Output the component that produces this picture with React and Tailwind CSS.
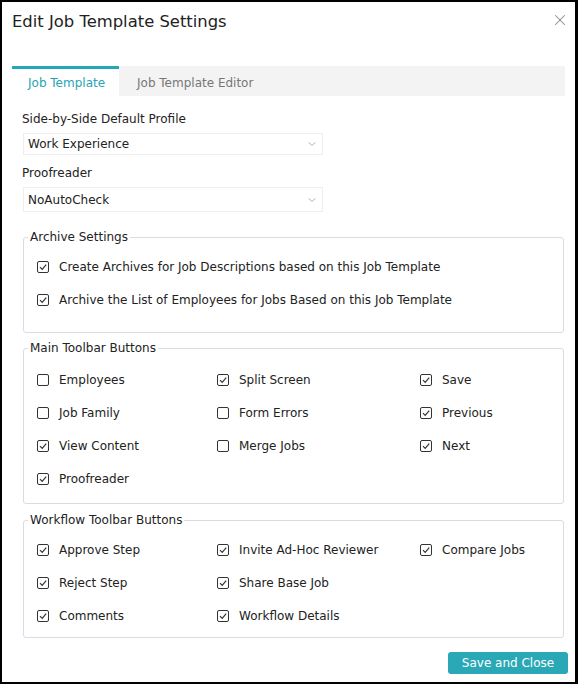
import { X, ChevronDown } from "lucide-react";

const font = { fontFamily: '"DejaVu Sans", Verdana, sans-serif' };

function Box({ checked }) {
  return (
    <span className="w-[12px] h-[12px] border border-[#333] rounded-[2px] flex items-center justify-center shrink-0 bg-white">
      {checked && (
        <svg width="10" height="10" viewBox="0 0 10 10">
          <path d="M2 5.2 L4.2 7.4 L8.2 2.6" fill="none" stroke="#333" strokeWidth="1.2" />
        </svg>
      )}
    </span>
  );
}

function Check({ label, checked }) {
  return (
    <label className="flex items-center gap-[10px] h-[33px] text-[12px] text-[#222]">
      <Box checked={checked} />
      <span>{label}</span>
    </label>
  );
}

function Group({ title, className, children }) {
  return (
    <fieldset className={`border border-[#d5dde5] rounded-[3px] mx-0 ${className}`}>
      <legend className="ml-[4px] px-[2px] text-[12px] leading-[16px] text-[#222]">{title}</legend>
      {children}
    </fieldset>
  );
}

function Select({ value, tall }) {
  return (
    <div
      className={`w-[300px] ${tall ? "h-[25px]" : "h-[22px]"} border border-[#eeeeee] flex items-center justify-between pl-[4px] pr-[4px] text-[12px] text-[#222]`}
    >
      <span>{value}</span>
      <ChevronDown size={12} strokeWidth={1.2} color="#777" />
    </div>
  );
}

const mainButtons = [
  ["Employees", false],
  ["Split Screen", true],
  ["Save", true],
  ["Job Family", false],
  ["Form Errors", false],
  ["Previous", true],
  ["View Content", true],
  ["Merge Jobs", false],
  ["Next", true],
  ["Proofreader", true],
];

const workflowButtons = [
  ["Approve Step", true],
  ["Invite Ad-Hoc Reviewer", true],
  ["Compare Jobs", true],
  ["Reject Step", true],
  ["Share Base Job", true],
  [null, false],
  ["Comments", true],
  ["Workflow Details", true],
];

export default function App() {
  return (
    <div
      className="w-[578px] h-[684px] bg-white border-2 border-r-[3px] border-black flex flex-col"
      style={font}
    >
      <div className="flex items-start justify-between pl-[10px] pr-[6px] pt-[9px] h-[64px]">
        <h1 className="text-[16.4px] leading-[22px] text-[#222]">Edit Job Template Settings</h1>
        <button className="mt-[0px] text-[#8a8a8a]">
          <X size={18} strokeWidth={1.4} />
        </button>
      </div>

      <div className="mx-[10px] flex bg-[#f3f3f3] h-[30px] text-[12px]">
        <div className="w-[107px] bg-white border-t-[3px] border-[#21a9b9] flex items-center pl-[16px] pt-[1px] text-[#2aa3b2]">
          Job Template
        </div>
        <div className="flex items-center pl-[18px] pt-[4px] text-[#777]">Job Template Editor</div>
      </div>

      <div className="pl-[20px] pr-[11px]">
        <div className="mt-[15px] text-[12px] leading-[16px] text-[#222]">Side-by-Side Default Profile</div>
        <div className="mt-[6px] ml-[1px]">
          <Select value="Work Experience" />
        </div>
        <div className="mt-[10px] text-[12px] leading-[16px] text-[#222]">Proofreader</div>
        <div className="mt-[6px] ml-[1px]">
          <Select value="NoAutoCheck" tall />
        </div>

        <Group title="Archive Settings" className="mt-[17px] ml-[1px] pt-[5px] pb-[16px]">
          <div className="pl-[13px]">
            <Check label="Create Archives for Job Descriptions based on this Job Template" checked />
            <Check label="Archive the List of Employees for Jobs Based on this Job Template" checked />
          </div>
        </Group>

        <Group title="Main Toolbar Buttons" className="mt-[7px] ml-[1px] pt-[7px] pb-[8px]">
          <div className="grid grid-cols-[180px_203px_1fr] pl-[13px]">
            {mainButtons.map(([label, checked]) => (
              <Check key={label} label={label} checked={checked} />
            ))}
          </div>
        </Group>

        <Group title="Workflow Toolbar Buttons" className="mt-[8px] ml-[1px] pt-[5px] pb-[5px]">
          <div className="grid grid-cols-[180px_203px_1fr] pl-[13px]">
            {workflowButtons.map(([label, checked], i) =>
              label ? <Check key={label} label={label} checked={checked} /> : <div key={i} />
            )}
          </div>
        </Group>

        <div className="flex justify-end mt-[14px] mr-[-4px]">
          <button className="w-[120px] h-[22px] rounded-[3px] bg-[#2aa8b6] text-white text-[12px]">
            Save and Close
          </button>
        </div>
      </div>
    </div>
  );
}
